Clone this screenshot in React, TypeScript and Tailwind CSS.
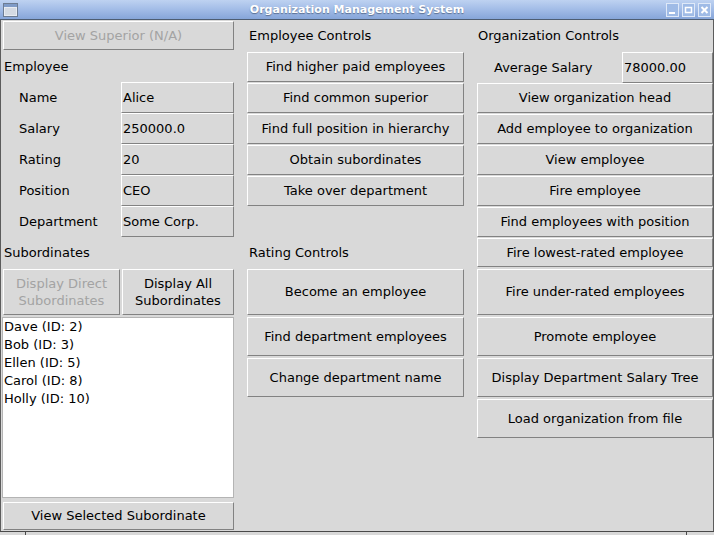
import React from "react";

const raised =
  "border border-t-white border-l-white border-b-[#828282] border-r-[#828282] bg-[#d9d9d9]";

function Btn({
  children,
  className = "",
  disabled = false,
}: {
  children: React.ReactNode;
  className?: string;
  disabled?: boolean;
}) {
  return (
    <div
      className={`${raised} flex items-center justify-center text-center leading-[17px] pb-px ${
        disabled ? "text-[#a3a3a3]" : "text-black"
      } ${className}`}
    >
      {children}
    </div>
  );
}

function Field({ label, value }: { label: string; value: string }) {
  return (
    <div className="flex h-[31px]">
      <div className="w-[118px] pl-[16px] flex items-center">{label}</div>
      <div className={`${raised} w-[113px] flex items-center pl-[1px]`}>{value}</div>
    </div>
  );
}

function TitleButton({ kind }: { kind: "min" | "max" | "close" }) {
  return (
    <div className="w-[13px] h-[14px] border border-[#dfe9f8] bg-[#9fbbe6] flex items-center justify-center">
      <svg width="9" height="10" viewBox="0 0 9 10">
        {kind === "min" && <rect x="1" y="7" width="6" height="2" fill="#fff" />}
        {kind === "max" && (
          <rect x="1.5" y="2.5" width="6" height="5" fill="none" stroke="#fff" strokeWidth="1.5" />
        )}
        {kind === "close" && (
          <path d="M1.5 2 L7.5 8 M7.5 2 L1.5 8" stroke="#fff" strokeWidth="2" />
        )}
      </svg>
    </div>
  );
}

export default function App() {
  const subs = ["Dave (ID: 2)", "Bob (ID: 3)", "Ellen (ID: 5)", "Carol (ID: 8)", "Holly (ID: 10)"];

  return (
    <div className="w-[714px] h-[535px] bg-[#d9d9d9] flex flex-col overflow-hidden font-['DejaVu_Sans',sans-serif] text-[13px] text-black">
      {/* title bar */}
      <div className="h-[20px] shrink-0 border-b border-[#4e5d72] bg-gradient-to-b from-[#bed2f1] via-[#a2bce7] to-[#86a5d9] grid grid-cols-[1fr_auto_1fr] items-center px-[3px]">
        <svg width="15" height="14" viewBox="0 0 15 14">
          <rect x="0.5" y="0.5" width="14" height="13" fill="#e8ecf2" stroke="#6d7c92" />
          <rect x="1" y="1" width="13" height="3" fill="#7f9bc7" />
          <rect x="2" y="5" width="11" height="7" fill="#d4dae3" />
        </svg>
        <div className="text-center text-[11px] font-bold text-white [text-shadow:0_1px_1px_#5a6f92] leading-none">
          Organization Management System
        </div>
        <div className="flex gap-[3px] justify-end">
          <TitleButton kind="min" />
          <TitleButton kind="max" />
          <TitleButton kind="close" />
        </div>
      </div>

      {/* main */}
      <div className="h-[511px] shrink-0 flex border-l border-r border-[#5c5c5c] pl-[2px]">
        {/* left column */}
        <div className="w-[231px] shrink-0 flex flex-col">
          <Btn disabled className="mt-[1px] h-[29px]">
            View Superior (N/A)
          </Btn>
          <div className="mt-[1px] h-[31px] flex items-center pl-[1px]">Employee</div>
          <Field label="Name" value="Alice" />
          <Field label="Salary" value="250000.0" />
          <Field label="Rating" value="20" />
          <Field label="Position" value="CEO" />
          <Field label="Department" value="Some Corp." />
          <div className="h-[31px] flex items-center pl-[1px]">Subordinates</div>
          <div className="mt-[1px] h-[46px] flex gap-[2px]">
            <Btn disabled className="w-[117px] h-[46px]">
              Display Direct
              <br />
              Subordinates
            </Btn>
            <Btn className="flex-1 h-[46px]">
              Display All
              <br />
              Subordinates
            </Btn>
          </div>
          <div className="mt-[2px] -ml-[1px] w-[232px] h-[181px] bg-white border border-[#b4b4b4] pl-[1px] leading-[18px]">
            {subs.map((s) => (
              <div key={s}>{s}</div>
            ))}
          </div>
          <Btn className="mt-[4px] h-[28px]">View Selected Subordinate</Btn>
        </div>

        {/* middle column */}
        <div className="w-[217px] shrink-0 ml-[13px] flex flex-col">
          <div className="h-[30px] pt-[1px] flex items-center pl-[2px]">Employee Controls</div>
          <div className="mt-[2px] flex flex-col gap-px">
            <Btn className="h-[30px]">Find higher paid employees</Btn>
            <Btn className="h-[30px]">Find common superior</Btn>
            <Btn className="h-[30px]">Find full position in hierarchy</Btn>
            <Btn className="h-[30px]">Obtain subordinates</Btn>
            <Btn className="h-[30px]">Take over department</Btn>
          </div>
          <div className="mt-[31px] h-[31px] flex items-center pl-[2px]">Rating Controls</div>
          <Btn className="mt-[1px] h-[46px]">Become an employee</Btn>
          <Btn className="mt-[2px] h-[39px]">Find department employees</Btn>
          <Btn className="mt-[2px] h-[39px]">Change department name</Btn>
        </div>

        {/* right column */}
        <div className="w-[236px] shrink-0 ml-[13px] flex flex-col">
          <div className="h-[30px] pt-[1px] flex items-center pl-[1px]">Organization Controls</div>
          <div className="mt-[2px] h-[31px] flex">
            <div className="w-[145px] pl-[17px] flex items-center">Average Salary</div>
            <div className={`${raised} w-[91px] flex items-center pl-[1px]`}>78000.00</div>
          </div>
          <div className="flex flex-col gap-px">
            <Btn className="h-[30px]">View organization head</Btn>
            <Btn className="h-[30px]">Add employee to organization</Btn>
            <Btn className="h-[30px]">View employee</Btn>
            <Btn className="h-[30px]">Fire employee</Btn>
            <Btn className="h-[30px]">Find employees with position</Btn>
          </div>
          <Btn className="mt-[1px] h-[29px]">Fire lowest-rated employee</Btn>
          <Btn className="mt-[2px] h-[46px]">Fire under-rated employees</Btn>
          <Btn className="mt-[2px] h-[39px]">Promote employee</Btn>
          <Btn className="mt-[2px] h-[39px]">Display Department Salary Tree</Btn>
          <Btn className="mt-[2px] h-[39px]">Load organization from file</Btn>
        </div>
      </div>

      {/* bottom strip */}
      <div className="h-[4px] shrink-0 border-t border-[#4a4a4a] flex">
        <div className="w-[26px] border-r border-[#4a4a4a]" />
        <div className="w-[661px] border-r border-[#4a4a4a]" />
        <div className="flex-1" />
      </div>
    </div>
  );
}
